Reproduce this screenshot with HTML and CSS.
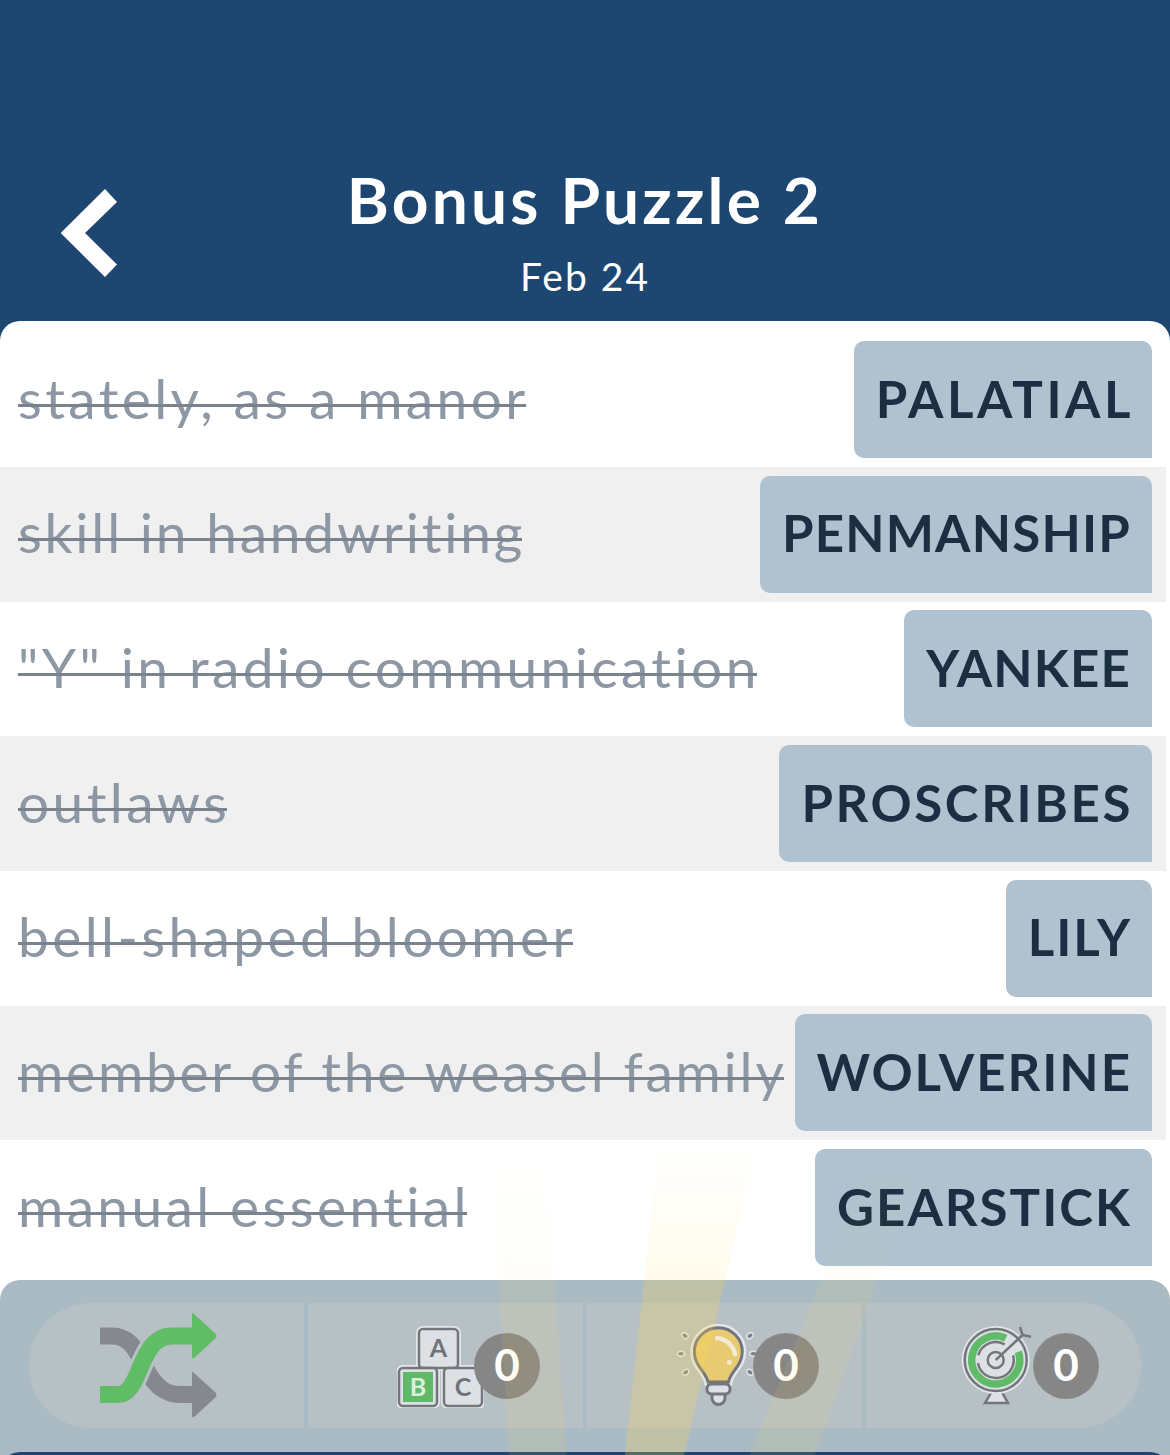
FILE: index.html
```html
<!DOCTYPE html>
<html lang="en">
<head>
<meta charset="utf-8">
<title>Bonus Puzzle 2</title>
<link rel="stylesheet" href="styles.css">
</head>
<body>
<div class="page">
  <header class="header">
    <svg class="back" width="58" height="88" viewBox="0 0 58 88"><polygon points="0.7,44 45,0 57,13 25,44 57,75.5 45,88" fill="#fff"/></svg>
    <div class="heading">
      <h1 class="title">Bonus Puzzle 2</h1>
      <p class="date">Feb 24</p>
    </div>
  </header>
  <main class="card">
    <div class="row"><s class="clue">stately, as a manor</s><span class="tile wider">PALATIAL</span></div>
    <div class="row alt"><s class="clue snug">skill in handwriting</s><span class="tile tight">PENMANSHIP</span></div>
    <div class="row"><s class="clue">"Y" in radio communication</s><span class="tile tight">YANKEE</span></div>
    <div class="row alt"><s class="clue">outlaws</s><span class="tile wide">PROSCRIBES</span></div>
    <div class="row"><s class="clue">bell-shaped bloomer</s><span class="tile">LILY</span></div>
    <div class="row alt"><s class="clue snug">member of the weasel family</s><span class="tile">WOLVERINE</span></div>
    <div class="row"><s class="clue">manual essential</s><span class="tile">GEARSTICK</span></div>
  </main>
  <section class="panel">
    <div class="pill">
      <div class="cell shuffle">
        <svg width="117" height="105" viewBox="0 0 117 105">
          <path d="M0 23 H12 C27 23 35 33 42 50" fill="none" stroke="#85888c" stroke-width="17"/>
          <path d="M46 56 C55 73 65 81.5 80 81.5 H96" fill="none" stroke="#85888c" stroke-width="17"/>
          <path d="M92 60 Q92 58 94 60 L116 80 Q117 82 116 84 L94 104 Q92 105 92 103 Z" fill="#85888c"/>
          <path d="M18 81.5 C42 81.5 38 23 72 23 H96" fill="none" stroke="#b7c0c5" stroke-width="23"/>
          <path d="M0 81.5 H18 C42 81.5 38 23 72 23 H96" fill="none" stroke="#60bc65" stroke-width="17"/>
          <path d="M92 1 Q92 -1 94 1 L116 21 Q117 23 116 25 L94 45 Q92 46 92 44 Z" fill="#60bc65"/>
        </svg>
      </div>
      <div class="cell">
        <svg class="icon blocks" width="87" height="82" viewBox="0 0 87 82">
          <g stroke="#e3e7ea" stroke-width="6" fill="none">
            <rect x="22" y="3" width="39" height="39" rx="4"/><rect x="2" y="42" width="38" height="38" rx="4"/><rect x="47" y="42" width="38" height="38" rx="4"/>
          </g>
          <g stroke="#73777b" stroke-width="2.5" fill="#dde1e5">
            <rect x="22" y="3" width="39" height="39" rx="4"/><rect x="2" y="42" width="38" height="38" rx="4"/><rect x="47" y="42" width="38" height="38" rx="4"/>
          </g>
          <rect x="6" y="46" width="30" height="30" fill="#5fb968"/>
          <text x="41.5" y="31" class="block-letter dark">A</text>
          <text x="21" y="70" class="block-letter light">B</text>
          <text x="66" y="70" class="block-letter dark">C</text>
        </svg>
        <span class="badge">0</span>
      </div>
      <div class="cell">
        <svg class="icon bulb" width="80" height="84" viewBox="0 0 80 84">
          <g fill="#7d8084" stroke="#dfe3e6" stroke-width="1.5"><ellipse cx="9" cy="11.7" rx="3.5" ry="2.5" transform="rotate(35 9 11.7)"/><ellipse cx="5" cy="29.7" rx="3.5" ry="2.5"/><ellipse cx="9.7" cy="48.3" rx="3.5" ry="2.5" transform="rotate(-35 9.7 48.3)"/><ellipse cx="74" cy="11.7" rx="3.5" ry="2.5" transform="rotate(-35 74 11.7)"/><ellipse cx="77.3" cy="29.7" rx="3.5" ry="2.5"/><ellipse cx="74" cy="48.3" rx="3.5" ry="2.5" transform="rotate(35 74 48.3)"/></g>
          <path d="M32 58 C30 48 18.3 42 18.3 27.7 A24 24 0 0 1 66.3 27.7 C66.3 42 54 48 52.5 58 Z" fill="#e8ca72" stroke="#e3e7ea" stroke-width="8"/>
          <path d="M32 58 C30 48 18.3 42 18.3 27.7 A24 24 0 0 1 66.3 27.7 C66.3 42 54 48 52.5 58 Z" fill="#e8ca72" stroke="#73777b" stroke-width="3"/>
          <path d="M41 14 C50 15 57 21 59 30" fill="none" stroke="#f3ead0" stroke-width="4.5" stroke-linecap="round"/>
          <circle cx="53.5" cy="38.5" r="2.5" fill="#f3ead0"/>
          <path d="M36 69 V74 A6.5 6.5 0 0 0 49 74 V69 Z" fill="#dde1e5" stroke="#73777b" stroke-width="3"/>
          <rect x="31" y="60" width="23" height="10" rx="4.5" fill="#dde1e5" stroke="#73777b" stroke-width="3"/>
        </svg>
        <span class="badge">0</span>
      </div>
      <div class="cell">
        <svg class="icon target" width="74" height="84" viewBox="0 0 74 84">
          <path d="M31.7 67.7 L25 79 H48 L41.7 67.7" fill="#dde1e5" stroke="#73777b" stroke-width="2.5"/>
          <circle cx="35.7" cy="36" r="34" fill="#e3e7ea"/>
          <circle cx="35.7" cy="36" r="31" fill="#dde1e5" stroke="#73777b" stroke-width="2.5"/>
          <path d="M58.3 27.8 A24 24 0 1 1 45.8 14.2" fill="none" stroke="#5fbb68" stroke-width="7.5"/>
          <path d="M53.1 31.3 A18 18 0 1 1 18 39.1 M18.3 31.3 A18 18 0 0 1 44.7 20.4" fill="none" stroke="#73777b" stroke-width="2.5"/>
          <circle cx="35.7" cy="36" r="8" fill="none" stroke="#73777b" stroke-width="2.5"/>
          <path d="M35.7 36 L62.6 11 M60 3 L62.6 11 L71 12.7" fill="none" stroke="#73777b" stroke-width="2.5"/>
        </svg>
        <span class="badge">0</span>
      </div>
    </div>
    <div class="footer"></div>
  </section>
  <svg class="beams" width="1170" height="320" viewBox="0 0 1170 320">
    <defs>
      <linearGradient id="fade" gradientUnits="userSpaceOnUse" x1="0" y1="0" x2="0" y2="320">
        <stop offset="0" stop-color="#ffd84a" stop-opacity="0"/>
        <stop offset="0.45" stop-color="#ffd84a" stop-opacity="0.1"/>
        <stop offset="0.455" stop-color="#ffd84a" stop-opacity="0.24"/>
        <stop offset="1" stop-color="#ffd84a" stop-opacity="0.24"/>
      </linearGradient>
      <linearGradient id="fadeSoft" gradientUnits="userSpaceOnUse" x1="0" y1="0" x2="0" y2="320">
        <stop offset="0" stop-color="#ffd84a" stop-opacity="0"/>
        <stop offset="0.45" stop-color="#ffd84a" stop-opacity="0.03"/>
        <stop offset="0.455" stop-color="#ffd84a" stop-opacity="0.08"/>
        <stop offset="1" stop-color="#ffd84a" stop-opacity="0.1"/>
      </linearGradient>
    </defs>
    <polygon points="490,0 545,0 566,320 509,320" fill="url(#fadeSoft)"/>
    <polygon points="660,0 759,0 684,320 625,320" fill="url(#fade)"/>
    <polygon points="880,0 930,0 815,320 750,320" fill="url(#fadeSoft)"/>
  </svg>
</div>
</body>
</html>
```
FILE: styles.css
```css
* { box-sizing: border-box; }
html, body { margin: 0; padding: 0; }
body { font-family: "Lato", "Noto Sans", sans-serif; background: #fff; }
.page { position: relative; width: 1170px; height: 1455px; overflow: hidden; display: flex; flex-direction: column; background: #fff; }

.header { flex: 0 0 341px; margin-bottom: -20px; padding: 163px 0 0 60px; background: #1d4771; position: relative; }
.back { position: absolute; left: 60px; top: 189px; }
.heading { text-align: center; padding-right: 60px; }
.title { margin: 0; font-size: 64px; line-height: 74px; font-weight: 700; letter-spacing: 3.2px; color: #fff; }
.date { margin: 13px 0 0; font-size: 39px; line-height: 52px; letter-spacing: 2px; color: #fff; }

.card { position: relative; flex: 0 0 959px; padding: 11.3px 4px 0 0; background: #fff; border-radius: 20px 20px 0 0; }
.row { height: 134.67px; display: flex; justify-content: space-between; align-items: center; padding: 0 14px 0 18px; }
.alt { background: #f0f0f1; }
.clue { position: relative; padding-bottom: 4px; font-size: 55px; line-height: 70px; letter-spacing: 3.4px; color: #8d98a4; text-decoration: none; white-space: nowrap; }
.snug { letter-spacing: 2.8px; }
.clue::after { content: ""; position: absolute; left: 0; right: 3px; top: 41px; height: 3px; background: #79838e; }
.tile { height: 117px; display: flex; align-items: center; padding: 0 20px 3px 22px; background: #b0c2cf; color: #1c2f42; font-size: 51px; font-weight: 700; letter-spacing: 2px; border-radius: 10px 10px 0 10px; white-space: nowrap; }
.wider { letter-spacing: 3.5px; padding-right: 18px; }
.wide { letter-spacing: 2.6px; padding-right: 19px; }
.tight { letter-spacing: 1.2px; padding-right: 21px; }

.panel { flex: 0 0 175px; padding-top: 23px; background: #abbbc4; border-radius: 20px 20px 0 0; overflow: hidden; }
.pill { display: grid; grid-template-columns: 275px 1fr 1fr 1fr; column-gap: 4px; height: 125px; margin: 0 29px; border-radius: 62px; overflow: hidden; }
.cell { background: #b7c0c5; display: flex; align-items: center; justify-content: flex-end; padding-right: 43px; }
.cell:last-child { padding-right: 42px; }
.shuffle { justify-content: flex-start; padding: 0 0 0 71px; }
.shuffle svg { margin-top: -1px; }
.icon { margin-top: 1px; flex: none; }
.blocks { margin-top: 3px; margin-right: -10px; }
.bulb { margin-right: -3px; }
.target { margin-right: -1px; }
.badge { position: relative; width: 66px; height: 66px; flex: none; border-radius: 50%; background: #868686; color: #fff; font-size: 44px; font-weight: 700; line-height: 62px; text-align: center; }
.block-letter { font-size: 25px; font-weight: 700; text-anchor: middle; }
.dark { fill: #6f7377; }
.light { fill: #dcefdc; }
.footer { height: 30px; margin-top: 24px; background: #1d4771; border-radius: 20px 20px 0 0; }

.beams { position: absolute; left: 0; top: 1135px; pointer-events: none; }
```
